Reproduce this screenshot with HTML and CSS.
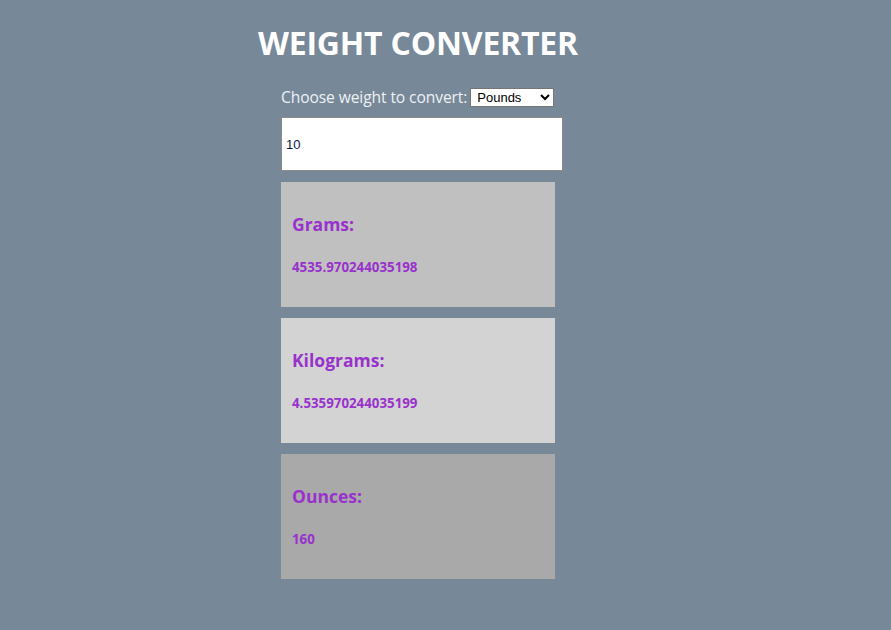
FILE: index.html
```html
<!DOCTYPE html>
<html>
<head>
<meta charset="utf-8">
<link rel="stylesheet" href="styles.css">
</head>
<body>
<div class="wrap">
  <h1 class="title">WEIGHT CONVERTER</h1>
  <div class="form">
    <div class="choose">
      <label class="label" for="unit">Choose weight to convert:</label>
      <select id="unit" class="select"><option>Pounds</option><option>Grams</option><option>Kilograms</option><option>Ounces</option></select>
    </div>
    <input class="input" type="text" value="10">
    <div class="card card-grams">
      <h4 class="card-title">Grams:</h4>
      <div class="card-value">4535.970244035198</div>
    </div>
    <div class="card card-kg">
      <h4 class="card-title">Kilograms:</h4>
      <div class="card-value">4.535970244035199</div>
    </div>
    <div class="card card-oz">
      <h4 class="card-title">Ounces:</h4>
      <div class="card-value">160</div>
    </div>
  </div>
</div>
</body>
</html>
```

FILE: styles.css
```css
html, body {
  margin: 0;
  padding: 0;
}
body {
  background: #778899;
  font-family: "Open Sans", "Noto Sans", sans-serif;
  width: 891px;
  height: 630px;
  overflow: hidden;
}
.wrap {
  width: 836px;
  display: flex;
  flex-direction: column;
  align-items: center;
  padding-top: 21px;
}
.title {
  margin: 0;
  font-size: 32px;
  font-weight: 700;
  color: #ffffff;
  line-height: 44px;
  letter-spacing: -0.2px;
}
.form {
  align-self: flex-start;
  margin-left: 281px;
  width: 282px;
  margin-top: 20px;
  display: flex;
  flex-direction: column;
}
.choose {
  display: flex;
  align-items: center;
  height: 24px;
}
.label {
  color: #eef1f4;
  font-size: 15.6px;
  margin-right: 3px;
  letter-spacing: -0.1px;
}
.select {
  width: 84px;
  height: 19px;
  font-family: "Liberation Sans", Arial, sans-serif;
  font-size: 13px;
  padding: 0 0 0 2px;
  border: 1px solid #767676;
  border-radius: 0;
  background: #fff;
  color: #000;
}
.input {
  box-sizing: border-box;
  margin-top: 8px;
  width: 282px;
  height: 54px;
  border: 1px solid #8a8a8a;
  background: #fff;
  font-family: "Liberation Sans", Arial, sans-serif;
  font-size: 13px;
  color: #0a1a3a;
  padding: 0 4px;
  outline: none;
}
.card {
  box-sizing: border-box;
  width: 274px;
  height: 125px;
  margin-top: 11px;
  padding: 29px 11px 0;
  color: #9932cc;
}
.card-grams { background: #c0c0c0; }
.card-kg { background: #d3d3d3; }
.card-oz { background: #a9a9a9; }
.card-title {
  margin: 0;
  font-size: 17.5px;
  font-weight: 700;
  line-height: 27px;
}
.card-value {
  margin-top: 20px;
  font-size: 13.3px;
  font-weight: 700;
  line-height: 19px;
}
```
